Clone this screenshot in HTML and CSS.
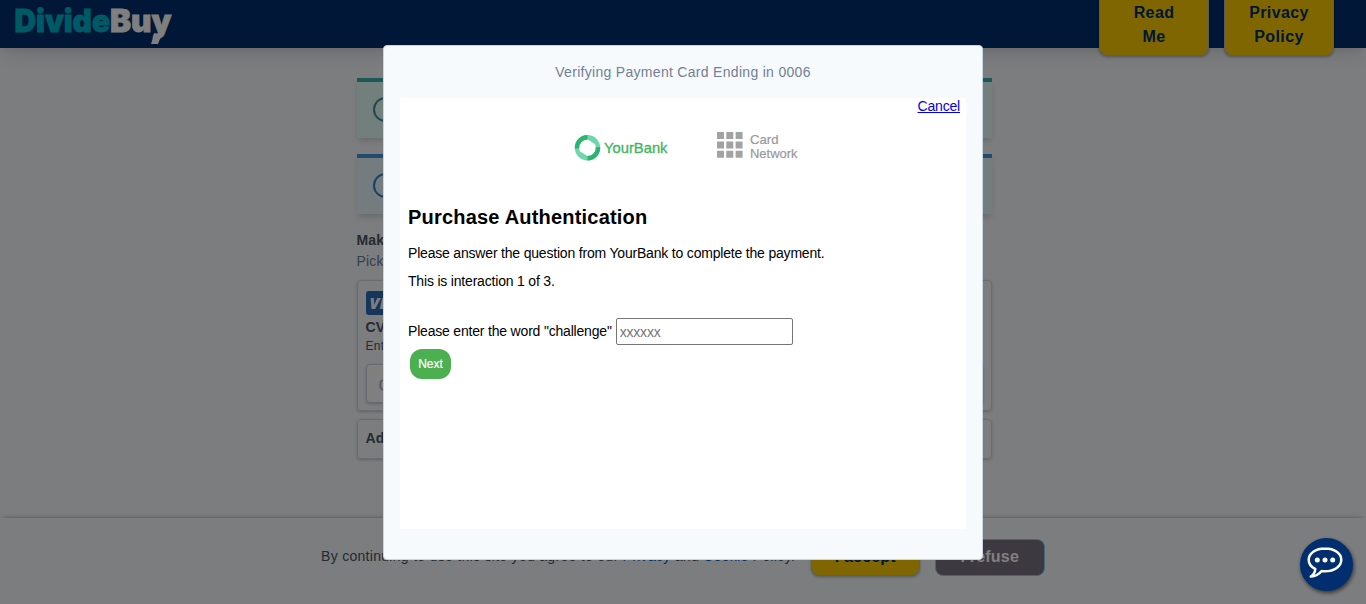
FILE: index.html
```html
<!DOCTYPE html>
<html lang="en">
<head>
<meta charset="utf-8">
<title>DivideBuy</title>
<link rel="stylesheet" href="styles.css">
</head>
<body>
<div class="page">
  <header class="header">
    <svg class="logo" width="160" height="46" viewBox="0 0 160 46">
      <g class="logo-text">
        <text class="logo-divide" x="0.5" y="30.5" textLength="95.5" lengthAdjust="spacingAndGlyphs">Divide</text>
        <text class="logo-buy" x="96" y="30.5" textLength="61.5" lengthAdjust="spacingAndGlyphs">Buy</text>
      </g>
      <path class="logo-tail" d="M140 33L148 33L144 43L137 43Z"/>
    </svg>
    <nav class="nav">
      <button class="btn btn-nav">Read<br>Me</button>
      <button class="btn btn-nav">Privacy<br>Policy</button>
    </nav>
  </header>
  <main class="content">
    <section class="notice notice-teal"><span class="ring"></span></section>
    <section class="notice notice-blue"><span class="ring"></span></section>
    <h3 class="heading">Make</h3>
    <p class="subheading">Pick</p>
    <section class="card">
      <div class="visa">VISA</div>
      <div class="card-title">CVV</div>
      <div class="card-help">Ent</div>
      <div class="card-input">CVV</div>
    </section>
    <section class="add-card">Add</section>
  </main>
  <footer class="footer">
    <p class="consent">By continuing to use this site you agree to our <a>Privacy</a> and <a>Cookie</a> Policy.</p>
    <button class="btn btn-accept">I accept</button>
    <button class="btn btn-refuse">I refuse</button>
  </footer>
</div>
<div class="overlay">
  <div class="modal">
    <div class="modal-title">Verifying Payment Card Ending in 0006</div>
    <div class="frame">
      <div class="cancel-row"><a class="cancel" href="#">Cancel</a></div>
      <div class="brands">
        <svg width="95" height="30" viewBox="0 0 95 30">
          <g fill="none" stroke-width="4.4">
            <circle cx="13.5" cy="15.8" r="10.5" stroke="#70d6ab"/>
            <path d="M3 16.5A10.5 10.5 0 0 1 13.5 5.3" stroke="#2cb56f"/>
            <path d="M24 15.1A10.5 10.5 0 0 1 13.5 26.3" stroke="#2cb56f"/>
          </g>
          <path d="M13 7L20 8L20.5 12ZM14 24.6L7 23.6L6.5 19.6Z" fill="#70d6ab"/>
          <text class="bank-text" x="30" y="20.5" textLength="63.5" lengthAdjust="spacingAndGlyphs">YourBank</text>
        </svg>
        <svg width="84" height="30" viewBox="0 0 84 30">
          <path fill="#a2a2a2" d="M1 0h7v7h-7zM10.3 0h7v7h-7zM19.6 0h7v7h-7zM1 9.4h7v7h-7zM10.3 9.4h7v7h-7zM19.6 9.4h7v7h-7zM1 18.8h7v7h-7zM10.3 18.8h7v7h-7zM19.6 18.8h7v7h-7z"/>
          <text class="network-text" x="34" y="12.2" textLength="28.5" lengthAdjust="spacingAndGlyphs">Card</text>
          <text class="network-text" x="34" y="25.5" textLength="47.5" lengthAdjust="spacingAndGlyphs">Network</text>
        </svg>
      </div>
      <h1 class="auth-title">Purchase Authentication</h1>
      <p class="auth-line">Please answer the question from YourBank to complete the payment.</p>
      <p class="auth-line">This is interaction 1 of 3.</p>
      <div class="question">
        <label class="question-label" for="answer">Please enter the word "challenge"</label>
        <input class="answer" id="answer" placeholder="xxxxxx">
      </div>
      <button class="next">Next</button>
    </div>
  </div>
</div>
<div class="chat">
  <svg width="36" height="32" viewBox="0 0 36 32">
    <path d="M18 1.6C8.5 1.6 1.7 6.4 1.7 12.8C1.7 17 4.3 20.2 8.3 22C8.1 25 6.8 27.5 3.8 29.6C8.7 29.2 12 27.2 14.6 23.9C15.7 24.1 16.8 24.2 18 24.2C27.6 24.2 34.3 19.2 34.3 12.8C34.3 6.4 27.6 1.6 18 1.6Z" fill="none" stroke="#fff" stroke-width="2.5" stroke-linejoin="round"/>
    <g fill="#fff"><circle cx="10.3" cy="13" r="2.5"/><circle cx="18" cy="13" r="2.5"/><circle cx="25.7" cy="13" r="2.5"/></g>
  </svg>
</div>
</body>
</html>
```

FILE: styles.css
```css
* { box-sizing: border-box; }
html, body { height: 100%; overflow: hidden; }
body { margin: 0; font-family: "Liberation Sans", Arial, sans-serif; color: #4a5568; }
h1, h3, p { margin: 0; }
button { font-family: inherit; }

.page { display: flex; flex-direction: column; height: 604px; background: #f7fafc; }
.header { display: flex; align-items: center; justify-content: space-between; flex: none; height: 48px; padding: 0 32px 0 14px; background: #002e6e; box-shadow: 0 10px 15px -3px rgba(0,0,0,.1), 0 4px 6px -2px rgba(0,0,0,.05); }
.logo { display: block; }
.logo-text { font: 900 31px Inter, sans-serif; stroke-width: .8px; }
.logo-divide { fill: #00b5cc; stroke: #00b5cc; }
.logo-buy { fill: #fff; stroke: #fff; }
.logo-tail { fill: #fff; }
.nav { display: flex; gap: 15px; }
.btn { width: 109.5px; border: 1px solid #90cdf4; border-radius: 8px; font-size: 16px; font-weight: 700; letter-spacing: .2px; line-height: 24px; box-shadow: 0 1px 3px rgba(0,0,0,.3); }
.btn-nav { width: 110px; height: 64px; padding: 2px 0 0; background: #ffcc00; color: #002e6e; border-color: #bbb; border-top: 0; letter-spacing: .4px; }

.content { width: 636px; margin-left: 356.5px; padding-top: 30px; flex: 1; }
.notice { width: 635px; height: 60px; margin-bottom: 16px; padding: 15px 16px; border-top: 4px solid; box-shadow: 0 4px 6px -1px rgba(0,0,0,.15); }
.notice-teal { background: #e6fffa; border-color: #38b2ac; color: #319795; }
.notice-blue { background: #ebf8ff; border-color: #4299e1; color: #3182ce; }
.ring { display: block; width: 25px; height: 25px; border: 2px solid; border-radius: 50%; }
.heading { margin-top: 15px; font-size: 14px; line-height: 21px; letter-spacing: .2px; color: #4a5568; }
.subheading { font-size: 14px; line-height: 21px; letter-spacing: .2px; color: #718096; }
.card, .add-card { width: 635px; border: 1px solid #d5d9de; border-radius: 4px; box-shadow: 0 1px 3px rgba(0,0,0,.2); color: #4a5568; }
.card { height: 131px; margin-top: 8px; padding: 10px 8px; }
.visa { width: 40px; height: 24px; padding-left: 4px; border-radius: 3px; background: #2a6db5; color: #fff; font: italic 900 16px/24px "Open Sans", sans-serif; }
.card-title { margin-top: 2px; font-size: 14px; font-weight: 700; line-height: 20px; letter-spacing: .2px; }
.card-help { font-size: 12px; line-height: 19px; letter-spacing: .3px; }
.card-input { height: 39px; margin-top: 8px; padding-left: 12px; border: 1px solid #cbd5e0; border-radius: 4px; line-height: 41px; color: #a0aec0; background: #fff; box-shadow: 0 1px 3px rgba(0,0,0,.2); }
.add-card { height: 40px; margin-top: 8px; padding-left: 8px; font-size: 14px; font-weight: 700; line-height: 37px; letter-spacing: .2px; }
.footer { display: flex; flex: none; height: 86px; padding: 21px 0 0 321px; background: #f7fafc; box-shadow: 0 -2px 6px -4px rgba(0,0,0,.7); }
.consent { width: 489.5px; flex: none; font-size: 14px; line-height: 34px; letter-spacing: .3px; white-space: nowrap; }
.consent a { color: #0066cc; }
.btn-accept, .btn-refuse { height: 37px; padding: 0 0 2px; line-height: 34px; }
.btn-accept { background: #ffcc00; color: #002e6e; }
.btn-refuse { margin-left: 15px; background: #787382; color: #fff; box-shadow: none; }

.overlay { position: fixed; inset: 0; display: flex; justify-content: center; align-items: flex-start; padding-top: 45px; background: rgba(0,0,0,.5); }
.modal { width: 600px; height: 515px; padding: 0 16px; border: 1px solid #cbd5e0; border-radius: 4px; background: #f7fafc; }
.modal-title { height: 52px; padding-top: 16px; text-align: center; font-size: 14px; line-height: 21px; letter-spacing: .3px; color: #718096; }
.frame { height: 431px; padding: 0 8px; background: #fff; color: #000; font-size: 14px; letter-spacing: -.19px; }
.cancel-row { height: 34px; padding-right: 6px; margin: 0 -8px; text-align: right; line-height: 16px; }
.cancel { color: #0000ee; }
.brands { display: flex; gap: 47px; height: 63px; padding-left: 166px; letter-spacing: 0; }
.bank-text { font-size: 15px; fill: #45b660; stroke: #45b660; stroke-width: .35px; }
.network-text { font-size: 13px; fill: #999; stroke: #999; stroke-width: .2px; }
.auth-title { margin-top: 10px; font-size: 20px; line-height: 24px; letter-spacing: .2px; }
.auth-line { line-height: 16px; margin-top: 12px; }
.auth-title + .auth-line { margin-top: 16px; }
.question { display: flex; align-items: center; gap: 4px; margin-top: 29px; height: 27px; }
.question-label { padding-bottom: 2px; }
.answer { width: 177px; height: 27px; padding: 1px 3px; border: 1px solid #767676; border-radius: 2px; font: 14px "Liberation Sans", sans-serif; letter-spacing: -.2px; }
.next { display: block; width: 41px; height: 30px; margin: 4px 0 0 2px; padding: 0; border: 0; border-radius: 12px; background: #4caf50; color: #fff; font-size: 12px; -webkit-text-stroke: .2px #fff; }
.chat { position: fixed; left: 1300px; top: 538px; display: flex; align-items: center; justify-content: center; width: 53px; height: 53px; padding: 0 3px 3px 0; border-radius: 50%; background: #002e6e; box-shadow: 1px 2px 4px rgba(0,0,0,.6); }
```
